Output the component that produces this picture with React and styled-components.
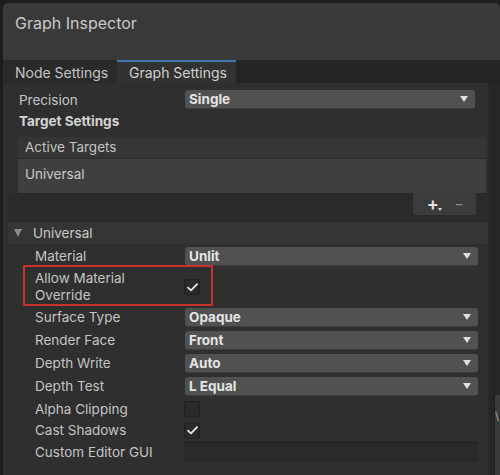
import React from "react";
import styled, { createGlobalStyle } from "styled-components";

const GlobalStyle = createGlobalStyle`
  html, body {
    margin: 0;
    padding: 0;
    background: #1d1d1d;
    font-family: Inter, "Noto Sans", "Liberation Sans", sans-serif;
    -webkit-font-smoothing: antialiased;
  }
  * {
    box-sizing: border-box;
  }
`;

const universalRows = [
  { label: "Material", type: "dropdown", value: "Unlit" },
  { label: "Allow Material Override", type: "check", checked: true, tall: true, highlight: true },
  { label: "Surface Type", type: "dropdown", value: "Opaque" },
  { label: "Render Face", type: "dropdown", value: "Front" },
  { label: "Depth Write", type: "dropdown", value: "Auto" },
  { label: "Depth Test", type: "dropdown", value: "L Equal" },
  { label: "Alpha Clipping", type: "check", checked: false, height: 22 },
  { label: "Cast Shadows", type: "check", checked: true, height: 21 },
  { label: "Custom Editor GUI", type: "text", height: 22 },
];

const App = () => {
  return (
    <>
      <GlobalStyle />
      <Window>
        <TitleBar>Graph Inspector</TitleBar>
        <TabBar>
          <Tab>Node Settings</Tab>
          <Tab active>Graph Settings</Tab>
        </TabBar>
        <Body>
          <Main>
            <TopSection>
              <FieldRow height={23}>
                <Label>Precision</Label>
                <Dropdown value="Single" />
              </FieldRow>
              <SectionTitle>Target Settings</SectionTitle>
            </TopSection>

            <TargetList>
              <ListHeader>Active Targets</ListHeader>
              <ListItem>Universal</ListItem>
            </TargetList>
            <ListFooter>
              <FooterButtons>
                <PlusButton>
                  +
                  <SmallArrow />
                </PlusButton>
                <MinusButton>−</MinusButton>
              </FooterButtons>
            </ListFooter>

            <Foldout>
              <FoldoutArrow />
              Universal
            </Foldout>
            <Rows>
              {universalRows.map((row) => (
                <PropertyRow key={row.label} height={row.tall ? 38 : row.height || 23}>
                  <IndentLabel narrow={row.tall}>{row.label}</IndentLabel>
                  {row.type === "dropdown" && <Dropdown value={row.value} />}
                  {row.type === "check" && <Checkbox checked={row.checked} />}
                  {row.type === "text" && <TextField />}
                  {row.highlight && <Highlight />}
                </PropertyRow>
              ))}
            </Rows>
          </Main>
          <Scrollbar>
            <ScrollThumb>
              <ThumbMark>\</ThumbMark>
            </ScrollThumb>
          </Scrollbar>
        </Body>
      </Window>
    </>
  );
};

const Dropdown = ({ value }) => (
  <Select>
    <SelectValue>{value}</SelectValue>
    <DropArrow />
  </Select>
);

const Checkbox = ({ checked }) => (
  <CheckBox>
    {checked && (
      <svg width="11" height="9" viewBox="0 0 11 9">
        <path d="M1 4.6 L4 7.4 L10 1.2" fill="none" stroke="#e8e8e8" strokeWidth="1.8" strokeLinecap="round" strokeLinejoin="round" />
      </svg>
    )}
  </CheckBox>
);

export default App;

const Window = styled.div`
  width: 497px;
  height: 475px;
  margin-left: 3px;
  padding-top: 3px;
  display: flex;
  flex-direction: column;
  overflow: hidden;
`;

const TitleBar = styled.div`
  height: 57px;
  background: #393939;
  border-radius: 5px 5px 0 0;
  color: #c9c9c9;
  font-size: 16px;
  padding: 10px 0 0 12px;
`;

const TabBar = styled.div`
  height: 23px;
  background: #242424;
  display: flex;
`;

const Tab = styled.div`
  width: ${(p) => (p.active ? "119px" : "114px")};
  background: ${(p) => (p.active ? "#323232" : "#2a2a2a")};
  border-top: 2px solid ${(p) => (p.active ? "#3f75b2" : "transparent")};
  color: ${(p) => (p.active ? "#d0d0d0" : "#c4c4c4")};
  font-size: 14px;
  padding: 1px 0 0 12px;
  line-height: 19px;
`;

const Body = styled.div`
  flex: 1;
  display: flex;
  background: #2f2f2f;
`;

const Main = styled.div`
  width: 485px;
  display: flex;
  flex-direction: column;
`;

const TopSection = styled.div`
  padding: 5px 13px 0 16px;
`;

const FieldRow = styled.div`
  height: ${(p) => p.height}px;
  display: grid;
  grid-template-columns: 166px 1fr;
  align-items: center;
`;

const Label = styled.div`
  color: #c4c4c4;
  font-size: 13.5px;
`;

const SectionTitle = styled.div`
  color: #d4d4d4;
  font-size: 13.5px;
  font-weight: 700;
  height: 20px;
  line-height: 20px;
`;

const TargetList = styled.div`
  margin: 6px 2px 0 15px;
  background: #3f3f3f;
  border-radius: 2px 2px 0 0;
`;

const ListHeader = styled.div`
  height: 22px;
  background: #353535;
  border-bottom: 1px solid #2b2b2b;
  color: #c4c4c4;
  font-size: 13.5px;
  line-height: 21px;
  padding-left: 7px;
`;

const ListItem = styled.div`
  height: 34px;
  color: #c8c8c8;
  font-size: 13.5px;
  line-height: 30px;
  padding-left: 7px;
`;

const ListFooter = styled.div`
  height: 29px;
  margin-left: 5px;
  background: #2a2a2a;
  display: flex;
  justify-content: flex-end;
  align-items: flex-start;
  padding-right: 12px;
  border-bottom: 1px solid #262626;
`;

const FooterButtons = styled.div`
  width: 63px;
  height: 22px;
  background: #3b3b3b;
  border-radius: 0 0 2px 2px;
  display: flex;
  align-items: center;
  justify-content: space-around;
  padding: 0 6px 0 8px;
`;

const PlusButton = styled.div`
  position: relative;
  color: #e2e2e2;
  font-size: 18px;
  font-weight: 600;
  line-height: 18px;
  width: 16px;
`;

const SmallArrow = styled.span`
  position: absolute;
  left: 11px;
  top: 13px;
  border-left: 2.5px solid transparent;
  border-right: 2.5px solid transparent;
  border-top: 3px solid #d8d8d8;
`;

const MinusButton = styled.div`
  color: #8a8a8a;
  font-size: 15px;
  line-height: 18px;
`;

const Foldout = styled.div`
  margin: 0 0 1px 5px;
  height: 22px;
  background: #353535;
  display: flex;
  align-items: center;
  color: #c8c8c8;
  font-size: 13.5px;
  padding-left: 6px;
  gap: 11px;
`;

const FoldoutArrow = styled.span`
  width: 0;
  height: 0;
  border-left: 4.5px solid transparent;
  border-right: 4.5px solid transparent;
  border-top: 8px solid #8a8a8a;
`;

const Rows = styled.div`
  margin-left: 5px;
  padding-right: 10px;
  display: flex;
  flex-direction: column;
`;

const PropertyRow = styled.div`
  position: relative;
  height: ${(p) => p.height}px;
  display: grid;
  grid-template-columns: 177px 1fr;
  align-items: center;
`;

const IndentLabel = styled.div`
  color: #c4c4c4;
  font-size: 13.5px;
  line-height: 17px;
  padding-left: 27px;
  padding-right: ${(p) => (p.narrow ? "45px" : "0")};
`;

const Select = styled.div`
  height: 19px;
  background: #515151;
  border-radius: 3px;
  border-bottom: 1px solid #3d3d3d;
  display: flex;
  align-items: center;
  justify-content: space-between;
  padding: 0 7px 0 4px;
`;

const SelectValue = styled.span`
  color: #e4e4e4;
  font-size: 13.5px;
  font-weight: 700;
`;

const DropArrow = styled.span`
  width: 0;
  height: 0;
  border-left: 4.5px solid transparent;
  border-right: 4.5px solid transparent;
  border-top: 6px solid #e0e0e0;
`;

const CheckBox = styled.div`
  width: 16px;
  height: 16px;
  background: #2a2a2a;
  border: 1px solid #202020;
  border-radius: 2px;
  display: flex;
  align-items: center;
  justify-content: center;
  margin-left: -1px;
`;

const TextField = styled.div`
  height: 20px;
  background: #2a2a2a;
  border-top: 1px solid #1e1e1e;
  border-radius: 2px;
  margin-left: -1px;
  margin-right: -1px;
`;

const Highlight = styled.div`
  position: absolute;
  left: 15px;
  top: -3px;
  width: 190px;
  height: 41px;
  border: 2px solid #c8312c;
  border-radius: 1px;
  pointer-events: none;
`;

const Scrollbar = styled.div`
  flex: 1;
  background: #262626;
  border-left: 1px solid #2b2b2b;
  display: flex;
  flex-direction: column;
  justify-content: flex-end;
  align-items: flex-end;
`;

const ScrollThumb = styled.div`
  width: 6px;
  height: 80px;
  background: #3a3a3a;
  border-left: 1px solid #1c1c1c;
  overflow: hidden;
`;

const ThumbMark = styled.div`
  color: #aaa;
  font-size: 11px;
  margin-top: 14px;
`;
